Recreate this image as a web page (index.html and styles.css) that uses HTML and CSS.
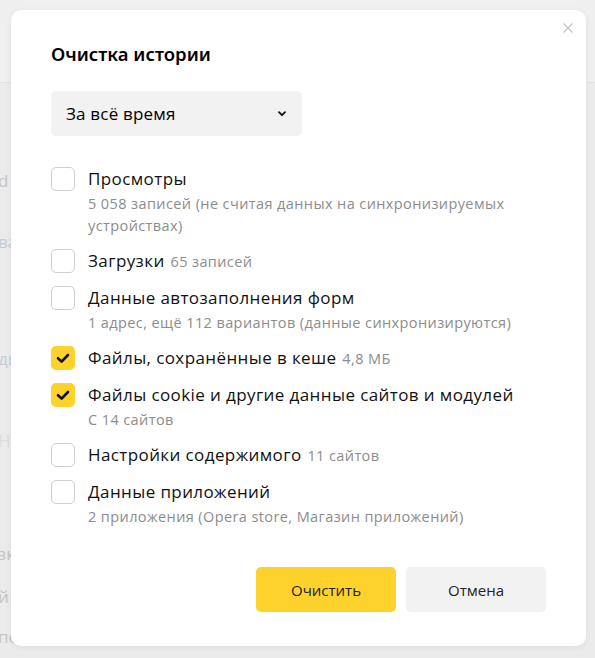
FILE: index.html
```html
<!DOCTYPE html>
<html lang="ru">
<head>
<meta charset="utf-8">
<title>Очистка истории</title>
<link rel="stylesheet" href="styles.css">
</head>
<body>
<div class="page">
  <div class="topbar"></div>
  <div class="ghost">
    <div class="g g1">d</div>
    <div class="g g2 blue">ва</div>
    <div class="g g3 blue">ди</div>
    <div class="g g4">Н</div>
    <div class="g g5">зк</div>
    <div class="g g6">й</div>
    <div class="g g7">пе</div>
  </div>
</div>

<div class="dialog">
  <button class="close" aria-label="Закрыть">
    <svg width="10" height="10" viewBox="0 0 10 10"><path d="M0.5 0.5L9.5 9.5M9.5 0.5L0.5 9.5" stroke="#c2c2c2" stroke-width="1.2" fill="none"/></svg>
  </button>
  <h1 class="title">Очистка истории</h1>

  <div class="select">
    <span>За всё время</span>
    <svg width="8" height="6" viewBox="0 0 8 6"><path d="M1 1.2L4 4.2L7 1.2" stroke="#111" stroke-width="1.8" fill="none" stroke-linecap="round" stroke-linejoin="round"/></svg>
  </div>

  <div class="list">
    <div class="item">
      <span class="box"></span>
      <div class="text">
        <div class="label">Просмотры</div>
        <div class="sub">5 058 записей (не считая данных на синхронизируемых устройствах)</div>
      </div>
    </div>
    <div class="item">
      <span class="box"></span>
      <div class="text">
        <div class="label">Загрузки <span class="count">65 записей</span></div>
      </div>
    </div>
    <div class="item">
      <span class="box"></span>
      <div class="text">
        <div class="label">Данные автозаполнения форм</div>
        <div class="sub">1 адрес, ещё 112 вариантов (данные синхронизируются)</div>
      </div>
    </div>
    <div class="item">
      <span class="box checked"><svg width="24" height="24" viewBox="0 0 24 24"><path d="M7 12.2L10.6 15.6L17 9" stroke="#111" stroke-width="2.6" fill="none" stroke-linecap="round" stroke-linejoin="round"/></svg></span>
      <div class="text">
        <div class="label">Файлы, сохранённые в кеше <span class="count">4,8 МБ</span></div>
      </div>
    </div>
    <div class="item">
      <span class="box checked"><svg width="24" height="24" viewBox="0 0 24 24"><path d="M7 12.2L10.6 15.6L17 9" stroke="#111" stroke-width="2.6" fill="none" stroke-linecap="round" stroke-linejoin="round"/></svg></span>
      <div class="text">
        <div class="label">Файлы cookie и другие данные сайтов и модулей</div>
        <div class="sub">С 14 сайтов</div>
      </div>
    </div>
    <div class="item">
      <span class="box"></span>
      <div class="text">
        <div class="label">Настройки содержимого <span class="count">11 сайтов</span></div>
      </div>
    </div>
    <div class="item">
      <span class="box"></span>
      <div class="text">
        <div class="label">Данные приложений</div>
        <div class="sub">2 приложения (Opera store, Магазин приложений)</div>
      </div>
    </div>
  </div>

  <div class="actions">
    <button class="btn primary">Очистить</button>
    <button class="btn secondary">Отмена</button>
  </div>
</div>
</body>
</html>
```

FILE: styles.css
```css
* { box-sizing: border-box; }

html, body {
  margin: 0;
  padding: 0;
}

body {
  width: 595px;
  height: 658px;
  overflow: hidden;
  background: #ebebeb;
  font-family: "Open Sans", "Noto Sans", sans-serif;
  position: relative;
}

.page {
  height: 658px;
}

.topbar {
  height: 83px;
  background: #efefef;
  border-bottom: 1px solid #e2e2e2;
}

.ghost {
  font-size: 17px;
  color: #c4c4c4;
  line-height: 20px;
}

.g { height: 20px; margin-left: -2px; }
.g.blue { color: #c3ccd8; }
.g1 { margin-top: 88px; }
.g2 { margin-top: 41px; }
.g3 { margin-top: 97px; }
.g4 { margin-top: 62px; color: #dcdcdc; }
.g5 { margin-top: 93px; }
.g6 { margin-top: 23px; }
.g7 { margin-top: 20px; }

.dialog {
  position: absolute;
  left: 11px;
  top: 10px;
  width: 575px;
  height: 636px;
  background: #fff;
  border-radius: 10px;
  box-shadow: 0 1px 6px rgba(0,0,0,0.06);
  padding: 31px 40px 34px 40px;
  display: flex;
  flex-direction: column;
}

.close {
  position: absolute;
  right: 13px;
  top: 13px;
  width: 10px;
  height: 10px;
  padding: 0;
  border: 0;
  background: none;
  display: flex;
}

.title {
  margin: 0;
  font-family: "Noto Sans", sans-serif;
  font-size: 18.5px;
  font-weight: 600;
  line-height: 26px;
  color: #000;
}

.select {
  margin-top: 24px;
  width: 251px;
  height: 45px;
  background: #f2f2f2;
  border-radius: 5px;
  display: flex;
  align-items: center;
  justify-content: space-between;
  padding: 0 16px 0 15px;
  font-size: 17px;
  letter-spacing: 0.2px;
  color: #000;
}

.list {
  margin-top: 31px;
  display: flex;
  flex-direction: column;
  gap: 12px;
}

.item {
  display: flex;
  align-items: flex-start;
  gap: 13px;
}

.box {
  flex: none;
  width: 24px;
  height: 24px;
  border: 1px solid #cfcfcf;
  border-radius: 5px;
  background: #fff;
  display: flex;
}

.box.checked {
  border: 0;
  background: #fdd22c;
}

.text {
  flex: 1;
  min-width: 0;
}

.label {
  font-size: 17px;
  line-height: 24px;
  letter-spacing: 0.4px;
  color: #111;
  white-space: nowrap;
}

.count {
  font-size: 14.5px;
  letter-spacing: 0.4px;
  color: #8c8c8c;
  margin-left: 1px;
}

.sub {
  margin-top: 2px;
  font-size: 14.5px;
  line-height: 22px;
  letter-spacing: 0.4px;
  color: #8c8c8c;
}

.actions {
  margin-top: auto;
  display: flex;
  gap: 10px;
  padding-left: 205px;
}

.btn {
  width: 140px;
  height: 45px;
  border: 0;
  border-radius: 5px;
  font-family: inherit;
  font-size: 15px;
  color: #222;
  padding: 0;
}

.btn.primary { background: #fdd22c; }
.btn.secondary { background: #f2f2f2; }
```
